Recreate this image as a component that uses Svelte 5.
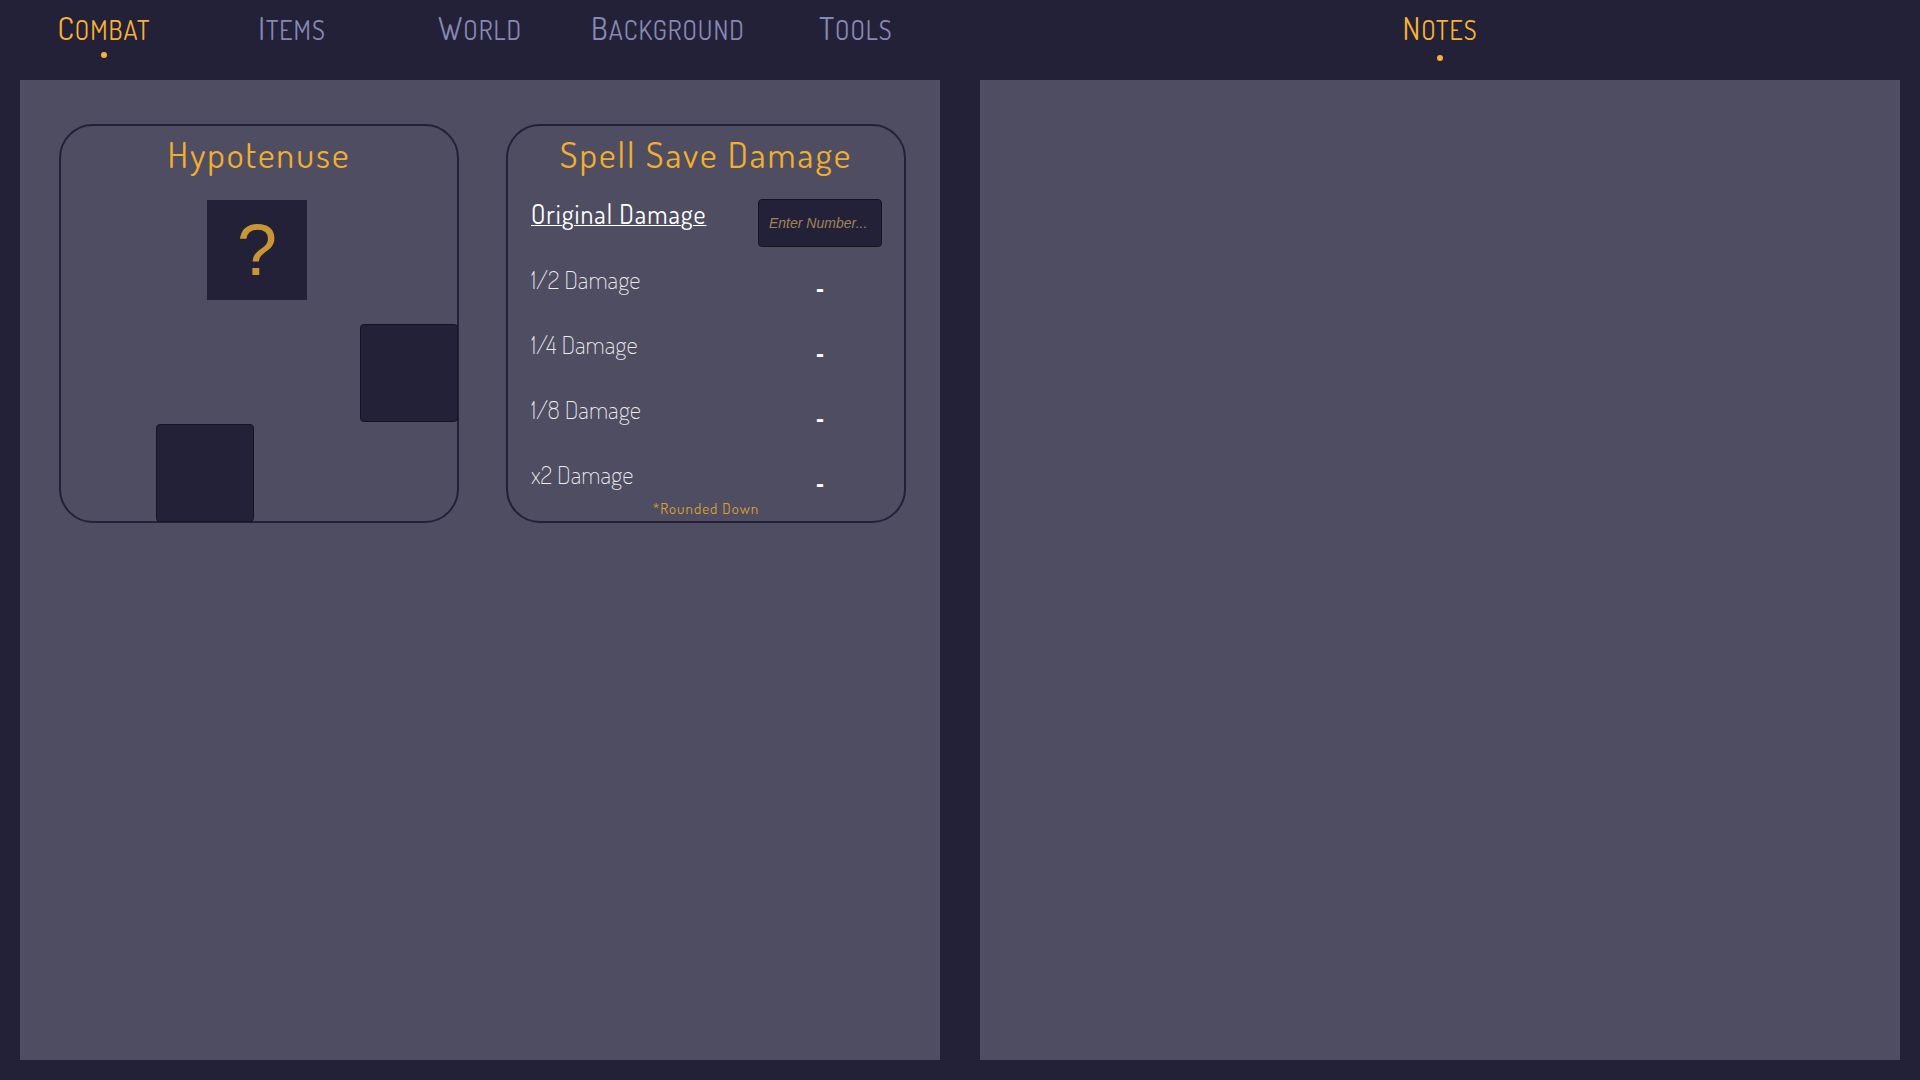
<script>
  const tabs = ['Combat', 'Items', 'World', 'Background', 'Tools'];
  const parts = [
    { label: '1/2 Damage', factor: 0.5 },
    { label: '1/4 Damage', factor: 0.25 },
    { label: '1/8 Damage', factor: 0.125 },
    { label: 'x2 Damage', factor: 2 }
  ];

  let active = $state('Combat');
  let damage = $state('');
  let sideA = $state('');
  let sideB = $state('');

  const valid = (v) => v !== '' && !Number.isNaN(Number(v));
  const hypotenuse = $derived(
    valid(sideA) && valid(sideB) ? Math.round(Math.hypot(Number(sideA), Number(sideB))) : '?'
  );
  const scaled = (factor) => (valid(damage) ? Math.floor(Number(damage) * factor) : '-');
</script>

<div class="page">
  <section class="half">
    <nav class="tabs">
      {#each tabs as tab}
        <a href="#{tab.toLowerCase()}" class="tab" class:active={active === tab} onclick={() => (active = tab)}>
          <span class="name">{tab}</span>
        </a>
      {/each}
    </nav>
    <main class="panel cards">
      <article class="card">
        <h2>Hypotenuse</h2>
        <div class="triangle">
          <output class="result">{hypotenuse}</output>
          <input class="side right" aria-label="Vertical side" bind:value={sideA} />
          <input class="side bottom" aria-label="Horizontal side" bind:value={sideB} />
        </div>
      </article>
      <article class="card">
        <h2>Spell Save Damage</h2>
        <div class="damage">
          <label class="original" for="damage">Original Damage</label>
          <input id="damage" class="entry" placeholder="Enter Number..." bind:value={damage} />
          {#each parts as part}
            <span class="part">{part.label}</span>
            <output class="value">{scaled(part.factor)}</output>
          {/each}
        </div>
        <p class="note">*Rounded Down</p>
      </article>
    </main>
  </section>
  <section class="half">
    <nav class="tabs">
      <a href="#notes" class="tab active notes"><span class="name">Notes</span></a>
    </nav>
    <div class="panel"></div>
  </section>
</div>

<style>
  :global(body) {
    margin: 0;
    background: #232138;
  }
  .page {
    display: grid;
    grid-template-columns: 1fr 1fr;
    min-height: 100vh;
    background: #232138;
    color: #fff;
    font-family: Dosis, 'Roboto Condensed', 'Liberation Sans Narrow', Roboto, sans-serif;
  }
  .half {
    display: flex;
    flex-direction: column;
    padding-bottom: 20px;
  }
  .tabs {
    display: flex;
    height: 80px;
    padding: 0 10px;
  }
  .tab {
    flex: 1 1 0;
    display: flex;
    flex-direction: column;
    align-items: center;
    gap: 2px;
    padding-top: 8px;
    color: #8689b3;
    text-decoration: none;
  }
  .name {
    display: block;
    font-size: 26px;
    line-height: 40px;
    letter-spacing: 1px;
    text-transform: uppercase;
  }
  .name::first-letter {
    font-size: 31px;
  }
  .tab.active {
    color: #f9b233;
  }
  .tab.active::after {
    content: '';
    width: 6px;
    height: 6px;
    border-radius: 50%;
    background: #f9b233;
  }
  .tab.notes {
    gap: 5px;
  }
  .panel {
    flex: 1;
    margin: 0 20px;
    background: #4f4d61;
  }
  .cards {
    display: flex;
    flex-wrap: wrap;
    align-items: flex-start;
    align-content: flex-start;
    gap: 47px;
    padding: 44px 34px 44px 39px;
  }
  .card {
    box-sizing: border-box;
    width: 400px;
    min-height: 399px;
    border: 2px solid #232138;
    border-radius: 34px;
  }
  h2 {
    margin: 0;
    padding-top: 6px;
    font-size: 36px;
    line-height: 44px;
    font-weight: 400;
    letter-spacing: 2px;
    text-align: center;
    color: #f2ae2e;
  }
  .triangle {
    display: grid;
    grid-template-columns: 102px 100px 100px;
    grid-template-rows: 124px 100px 98px;
    margin: 24px -1px -1px 95px;
  }
  .result {
    grid-column: 1 / 3;
    justify-self: center;
    width: 100px;
    height: 100px;
    background: #232138;
    color: #c89632;
    font-family: 'Liberation Sans', sans-serif;
    font-size: 72px;
    line-height: 100px;
    text-align: center;
  }
  .side,
  .entry {
    box-sizing: border-box;
    border: 1px solid #16141f;
    border-radius: 4px;
    background: #232138;
    color: #f2ae2e;
    font-family: 'Liberation Sans', sans-serif;
  }
  .side {
    width: 98px;
    height: 98px;
    font-size: 32px;
    text-align: center;
  }
  .right {
    grid-area: 2 / 3;
    justify-self: end;
  }
  .bottom {
    grid-area: 3 / 1;
  }
  .damage {
    display: grid;
    grid-template-columns: 1fr 124px;
    grid-auto-rows: 65px;
    padding: 23px 22px 0 23px;
  }
  .original,
  .part {
    line-height: 30px;
  }
  .original {
    font-size: 26px;
    letter-spacing: 1px;
    text-decoration: underline;
    text-decoration-thickness: 1px;
  }
  .part {
    color: #ececef;
    font-size: 25px;
    font-weight: 200;
  }
  .entry {
    width: 100%;
    height: 48px;
    padding: 0 10px;
    font-size: 14px;
  }
  .entry::placeholder {
    color: #a08358;
    font-style: italic;
    opacity: 1;
  }
  .value {
    font-family: 'Liberation Sans', sans-serif;
    font-size: 24px;
    font-weight: 700;
    line-height: 50px;
    text-align: center;
  }
  .note {
    margin: -25px 0 0;
    font-size: 15px;
    line-height: 20px;
    letter-spacing: 1px;
    text-align: center;
    color: #d9a034;
  }
</style>
